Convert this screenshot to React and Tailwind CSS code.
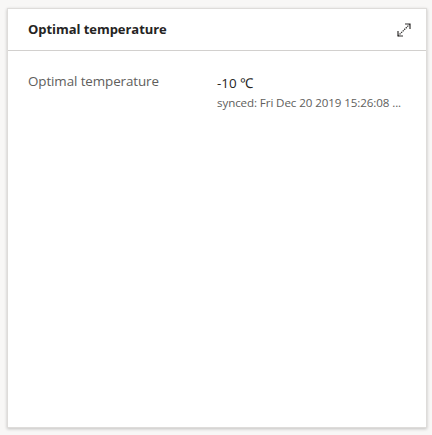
export default function App() {
  return (
    <div className="w-[432px] h-[435px] bg-[#f8f7f6] pt-[8px] pl-[7px]" style={{ fontFamily: '"Open Sans", "Noto Sans", sans-serif' }}>
      <div className="w-[420px] h-[420px] bg-white border border-[#dedcda] shadow-[0_1px_3px_rgba(0,0,0,0.22)] flex flex-col">
        <div className="h-[42px] flex items-center justify-between pl-[20px] pr-[14px] border-b border-[#d2d0ce]">
          <span className="text-[13px] font-bold text-[#252423] tracking-[-0.05px]">Optimal temperature</span>
          <svg width="16" height="16" viewBox="0 0 16 16" fill="none" stroke="#323130" strokeWidth="1.2">
            <path d="M2 14 L14 2" strokeDasharray="1.4 0.8" />
            <path d="M9 2 H14 V7" />
            <path d="M2 9 V14 H7" />
          </svg>
        </div>
        <div className="flex pt-[22px] pl-[20px]">
          <div className="w-[189px] text-[13.4px] text-[#605e5c] leading-[16px] tracking-[-0.1px]">Optimal temperature</div>
          <div className="flex flex-col">
            <span className="text-[13.4px] text-[#252423] leading-[16px] pt-[2px]">-10 ℃</span>
            <span className="text-[11.6px] text-[#605e5c] leading-[14px] mt-[5px] tracking-[-0.1px]">synced: Fri Dec 20 2019 15:26:08 ...</span>
          </div>
        </div>
      </div>
    </div>
  );
}
